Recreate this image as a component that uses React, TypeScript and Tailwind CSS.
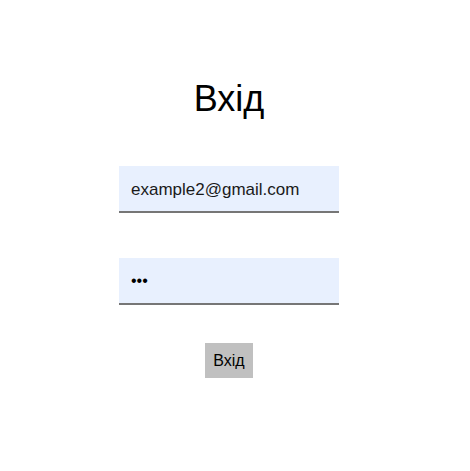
import React, { useState } from "react";

export default function App() {
  const [email, setEmail] = useState("example2@gmail.com");
  const [password, setPassword] = useState("123");

  return (
    <div className="min-h-screen w-full bg-white font-['Liberation_Sans',Arial,sans-serif] text-black">
      <div className="flex w-[458px] flex-col items-center pt-[78px]">
        {/* Title */}
        <h1 className="text-[36px] leading-[41px] font-normal">Вхід</h1>

        {/* Form */}
        <form
          className="mt-[47px] flex flex-col items-center"
          onSubmit={(e) => e.preventDefault()}
        >
          <input
            type="email"
            value={email}
            onChange={(e) => setEmail(e.target.value)}
            className="h-[47px] w-[220px] border-b-2 border-[#767676] bg-[#e8f0fe] px-3 pt-[2px] text-[17px] text-[#1a1a1a] outline-none"
          />
          <input
            type="password"
            value={password}
            onChange={(e) => setPassword(e.target.value)}
            className="mt-[45px] h-[47px] w-[220px] border-b-2 border-[#767676] bg-[#e8f0fe] px-3 text-[16px] outline-none"
          />
          <button
            type="submit"
            className="mt-[38px] h-[35px] w-[48px] bg-[#c0c0c0] text-[16px] leading-none"
          >
            Вхід
          </button>
        </form>
      </div>
    </div>
  );
}
